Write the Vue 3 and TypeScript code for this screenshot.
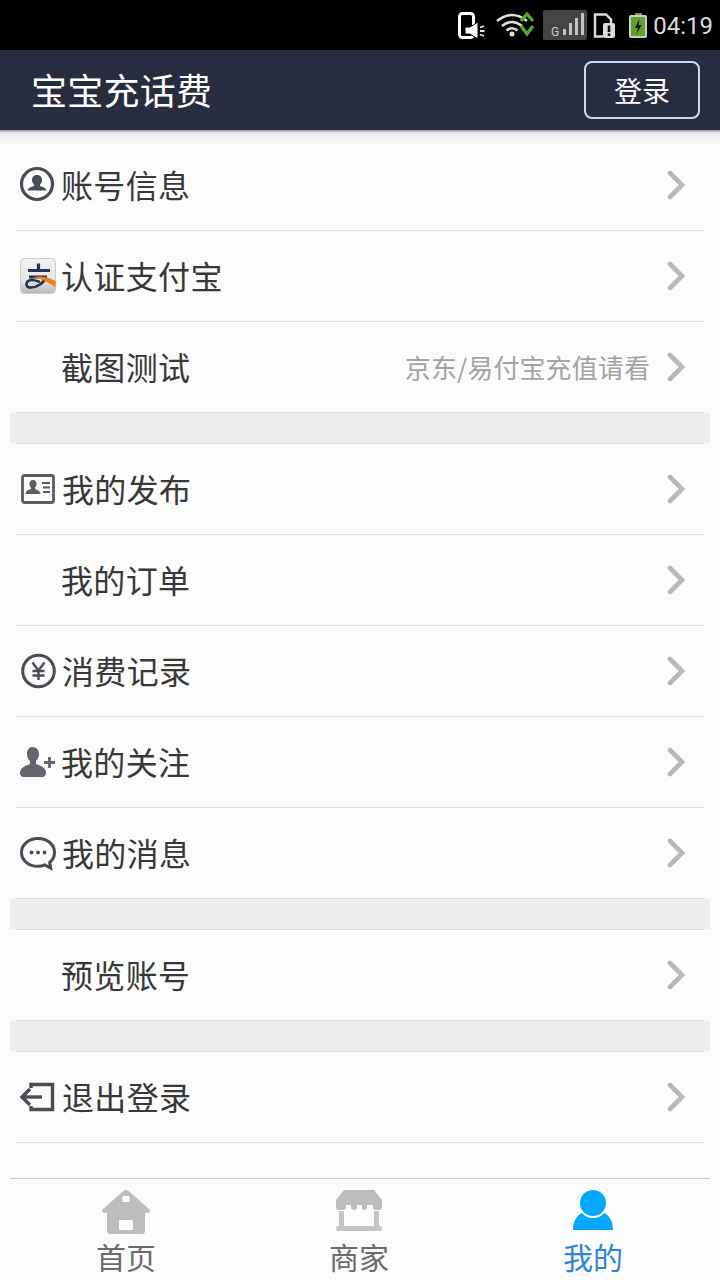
<script setup lang="ts">
interface Row { label: string; icon?: string; hint?: string; nudge?: boolean }
const groups: Row[][] = [
  [
    { label: '账号信息', icon: 'user' },
    { label: '认证支付宝', icon: 'alipay' },
    { label: '截图测试', hint: '京东/易付宝充值请看' },
  ],
  [
    { label: '我的发布', icon: 'card', nudge: true },
    { label: '我的订单' },
    { label: '消费记录', icon: 'yen', nudge: true },
    { label: '我的关注', icon: 'follow' },
    { label: '我的消息', icon: 'chat', nudge: true },
  ],
  [{ label: '预览账号' }],
  [{ label: '退出登录', icon: 'logout', nudge: true }],
]
</script>

<template>
  <div class="page">
    <div class="status">
      <svg class="s-icons" width="200" height="50" viewBox="0 0 200 50">
        <rect x="9.500" y="13.500" width="14" height="24" rx="3" fill="#000" stroke="#fff" stroke-width="3" />
        <path d="M15 27h5l8-5v17l-8-5h-5z" fill="#fff" stroke="#000" stroke-width="1" />
        <path d="M30 27.500l4-1.500M30 31h4.500M30 34.500l4 1.500" stroke="#e6e6e6" stroke-width="1.800" fill="none" />

        <path d="M47 21Q62 9 77 21M52 26Q62 18 72 26M56.500 30.500Q62 26 67.500 30.500" stroke="#ddd" stroke-width="2.600" fill="none" />
        <circle cx="62" cy="34" r="2.500" fill="#ddd" />
        <path d="M71 21l6-7 6 7M71 26l6 8 6-8" stroke="#5aa02c" stroke-width="3.400" fill="none" />

        <rect x="93" y="10" width="44" height="30" rx="2" fill="#444" />
        <text x="101" y="36" font-size="12" fill="#ccc" font-family="Roboto, sans-serif">G</text>
        <path d="M113 29h3v6h-3zM119 23h3v12h-3zM125 18h3v17h-3zM131 13h3v22h-3z" fill="#c4c4c4" />

        <path d="M153 36.500H145V14.500H156L161 19.500V23" fill="none" stroke="#ddd" stroke-width="2.400" />
        <rect x="153" y="23" width="12" height="15" rx="2" fill="#ddd" />
        <path d="M159 25.500v6.500M159 33.500v2.500" stroke="#111" stroke-width="2.600" />

        <rect x="185" y="13" width="7" height="3" fill="#6aa83a" />
        <rect x="179" y="15" width="18" height="23" rx="2" fill="#ccc" />
        <rect x="181" y="17" width="14" height="19" fill="#62a02e" />
        <path d="M189.500 19L185 28h3l-1.500 6 5-9h-3z" fill="#111" />
      </svg>
      <span class="time">04:19</span>
    </div>

    <header class="header">
      <h1 class="title">宝宝充话费</h1>
      <button class="login">登录</button>
    </header>

    <main class="content">
      <template v-for="(group, g) in groups" :key="g">
        <div v-if="g > 0" class="band"></div>
        <section class="group" :class="{ 'group-top': g > 0 }">
          <div v-for="row in group" :key="row.label" class="row">
            <span class="icon">
              <svg v-if="row.icon" width="40" height="40" viewBox="0 0 40 40">
                <g v-if="row.icon === 'user'">
                  <circle cx="21" cy="19" r="15.500" fill="none" stroke="#484c55" stroke-width="3.200" />
                  <path d="M21 10c3.500 0 5 2.500 5 5 0 2-1 3.500-2 4.700v1.300c2 1 6 1.500 6.500 4.500h-19c.5-3 4.500-3.500 6.500-4.500v-1.300c-1-1.200-2-2.700-2-4.700 0-2.500 1.500-5 5-5z" fill="#484c55" />
                </g>
                <g v-else-if="row.icon === 'alipay'">
                  <defs>
                    <linearGradient id="ali" x1="0" y1="0" x2="0" y2="1">
                      <stop offset="0" stop-color="#f2f2f2" />
                      <stop offset="0.6" stop-color="#e6e6e6" />
                      <stop offset="1" stop-color="#b9b9b9" />
                    </linearGradient>
                  </defs>
                  <rect x="4.500" y="2.500" width="35" height="35" rx="4" fill="url(#ali)" stroke="#ccc" />
                  <path d="M12 14.500h22M22.500 7.500v7M13 21h18" stroke="#223355" stroke-width="3.200" fill="none" />
                  <path d="M30 21c-2 6-9 10.500-15 10.500-6 0-6-6.500 0-7.500 3-.5 6 1 9 2" stroke="#223355" stroke-width="2.600" fill="none" />
                  <path d="M17 22c8 0 16 5 22.500 9v-6C33 22 27 18.500 17 22z" fill="#ee7f1a" />
                </g>
                <g v-else-if="row.icon === 'card'">
                  <rect x="6.500" y="6.500" width="31" height="27" rx="2" fill="none" stroke="#5a5c62" stroke-width="2.800" />
                  <path d="M17 11c2.500 0 3.500 2 3.500 4 0 1.500-.7 2.700-1.500 3.500v1.500c1.500.8 5 1 5.500 5H9.500c.5-4 4-4.200 5.500-5v-1.500c-.8-.8-1.500-2-1.500-3.500 0-2 1-4 3.500-4z" fill="#5a5c62" />
                  <path d="M26 14h8M27 18.500h7M27 23h7" stroke="#5a5c62" stroke-width="1.800" />
                </g>
                <g v-else-if="row.icon === 'yen'">
                  <circle cx="22.500" cy="20" r="15.800" fill="none" stroke="#484c55" stroke-width="3" />
                  <path d="M16.500 11.500l6 8 6-8M22.500 19.500V29M16.500 20h12M16.500 24.500h12" fill="none" stroke="#484c55" stroke-width="2.400" />
                </g>
                <g v-else-if="row.icon === 'follow'">
                  <path d="M16 5c5 0 7 3.500 7 7 0 3-1.500 5.500-3 7v3c3 1.500 9 2.500 10 8 .3 2-1 5-3 5H7c-2.500 0-3.300-3-3-5 1-5.500 7-6.500 10-8v-3c-1.500-1.500-3-4-3-7 0-3.500 2-7 5-7z" fill="#63656c" />
                  <path d="M28 20.500h11M33.500 15v11" stroke="#63656c" stroke-width="2.800" />
                </g>
                <g v-else-if="row.icon === 'chat'">
                  <path d="M22 5.500c9.500 0 16.500 6 16.500 14 0 4-1.800 7.500-4.800 10l1 5.500-6-3c-2 .8-4.200 1.300-6.700 1.300-9.500 0-16.500-6-16.500-13.800S12.500 5.500 22 5.500z" fill="none" stroke="#484c55" stroke-width="3" />
                  <circle cx="15.500" cy="19.500" r="1.900" fill="#484c55" />
                  <circle cx="22" cy="19.500" r="1.900" fill="#484c55" />
                  <circle cx="28.500" cy="19.500" r="1.900" fill="#484c55" />
                </g>
                <g v-else-if="row.icon === 'logout'">
                  <path d="M15 11V7.500h21.500v25H15V29" fill="none" stroke="#484c55" stroke-width="3.400" />
                  <path d="M6 20h20" stroke="#484c55" stroke-width="3.400" />
                  <path d="M14 12l-8 8 8 8" fill="none" stroke="#484c55" stroke-width="3.400" />
                </g>
              </svg>
            </span>
            <span class="label" :class="{ nudge: row.nudge }">{{ row.label }}</span>
            <span v-if="row.hint" class="hint">{{ row.hint }}</span>
            <svg class="chev" width="18" height="30" viewBox="0 0 18 30">
              <path d="M3 3l12 12L3 27" fill="none" stroke="#b8b8b8" stroke-width="4.600" stroke-linecap="round" />
            </svg>
          </div>
        </section>
      </template>
    </main>

    <nav class="tabs">
      <div class="tab">
        <svg width="48" height="44" viewBox="0 0 48 44">
          <path fill-rule="evenodd" d="M24 0c1 0 2 .4 3 1.200L47 19c1.500 1.500 1 3.800-1 3.800h-3V41c0 2-1 3-3 3H8c-2 0-3-1-3-3V22.800H2c-2 0-2.500-2.300-1-3.800L21 1.200C22 .4 23 0 24 0zM20.500 6v6h7V6zM17 30v10h14V30z" fill="#bdbdbd" />
        </svg>
        <span class="tab-label">首页</span>
      </div>
      <div class="tab">
        <svg width="46" height="44" viewBox="0 0 46 44">
          <path d="M8 0H38L46 10V17Q46 20 43 20H40Q37 20 37 17V15H31V17Q31 20 28 20Q26 20 26 17V15H21V17Q21 20 18 20Q15 20 15 17V15H10V17Q10 20 7 20H3Q0 20 0 17V10Z" fill="#bdbdbd" />
          <path d="M3 21h5v15h30V21h5v15h2c1 0 1 5 0 5H1c-1 0-1-5 0-5h2z" fill="#c4c4c4" />
        </svg>
        <span class="tab-label">商家</span>
      </div>
      <div class="tab">
        <svg width="40" height="44" viewBox="0 0 40 44">
          <circle cx="20" cy="13" r="13" fill="#00a8ff" />
          <path d="M9 23c3 4 7 5 11 5s8-1 11-5c5 2 9 8 9 17H0c0-9 4-15 9-17z" fill="#00a8ff" />
        </svg>
        <span class="tab-label active">我的</span>
      </div>
    </nav>
  </div>
</template>

<style scoped>
.page {
  width: 720px;
  height: 1280px;
  display: flex;
  flex-direction: column;
  background: #fbfbfb;
  font-family: "Noto Sans CJK SC", "Noto Sans", sans-serif;
  overflow: hidden;
}
.status {
  height: 50px;
  flex: none;
  background: #000;
  display: flex;
  align-items: center;
  justify-content: flex-end;
  padding-right: 7px;
  box-sizing: border-box;
}
.s-icons { display: block; flex: none; }
.time {
  margin-left: 3px;
  font-family: Roboto, sans-serif;
  font-size: 24px;
  color: #dcdcdc;
  line-height: 50px;
  margin-top: 2px;
}
.header {
  height: 80px;
  flex: none;
  background: #272c3e;
  display: flex;
  align-items: flex-start;
  justify-content: space-between;
  padding: 11px 20px 0 31px;
  box-sizing: border-box;
}
.title {
  margin: 0;
  font-size: 36px;
  line-height: 56px;
  font-weight: 400;
  letter-spacing: 0.25px;
  color: #fff;
}
.login {
  width: 116px;
  height: 58px;
  border: 2px solid #c3e0ea;
  border-radius: 8px;
  background: transparent;
  color: #fff;
  font-family: inherit;
  font-size: 28px;
  padding: 0;
}
.content {
  flex: 1;
  padding: 10px 10px 0;
  background: linear-gradient(to bottom, #8d8d8d 0, #d8d8d8 2px, #efefef 4px, #fbfbfb 16px) no-repeat top / 100% 16px;
}
.group-top { border-top: 1px solid #dedede; }
.group { margin: 0 6px; }
.band { height: 30px; background: #eeeeee; }
.row {
  height: 90px;
  border-bottom: 1px solid #dedede;
  display: flex;
  align-items: center;
}
.icon {
  width: 45px;
  height: 40px;
  flex: none;
}
.icon svg { display: block; }
.label {
  font-size: 32px;
  letter-spacing: 0.35px;
  color: #383838;
  margin-bottom: 2px;
}
.nudge { margin-left: 1px; }
.hint {
  margin-left: auto;
  margin-bottom: 2px;
  font-size: 26px;
  letter-spacing: 0.1px;
  color: #a3a3a3;
}
.chev {
  flex: none;
  margin-left: 17px;
  margin-right: 19px;
}
.label + .chev { margin-left: auto; }
.tabs {
  height: 102px;
  flex: none;
  margin: 0 10px;
  border-top: 1px solid #cfcfcf;
  box-sizing: border-box;
  display: grid;
  grid-template-columns: 232px 234px 234px;
}
.tab {
  display: flex;
  flex-direction: column;
  align-items: center;
  padding-top: 11px;
}
.tab svg { display: block; flex: none; }
.tab-label {
  font-size: 30px;
  line-height: 40px;
  margin-top: 2px;
  color: #6b6b6b;
}
.tab-label.active { color: #2e86d6; }
</style>
